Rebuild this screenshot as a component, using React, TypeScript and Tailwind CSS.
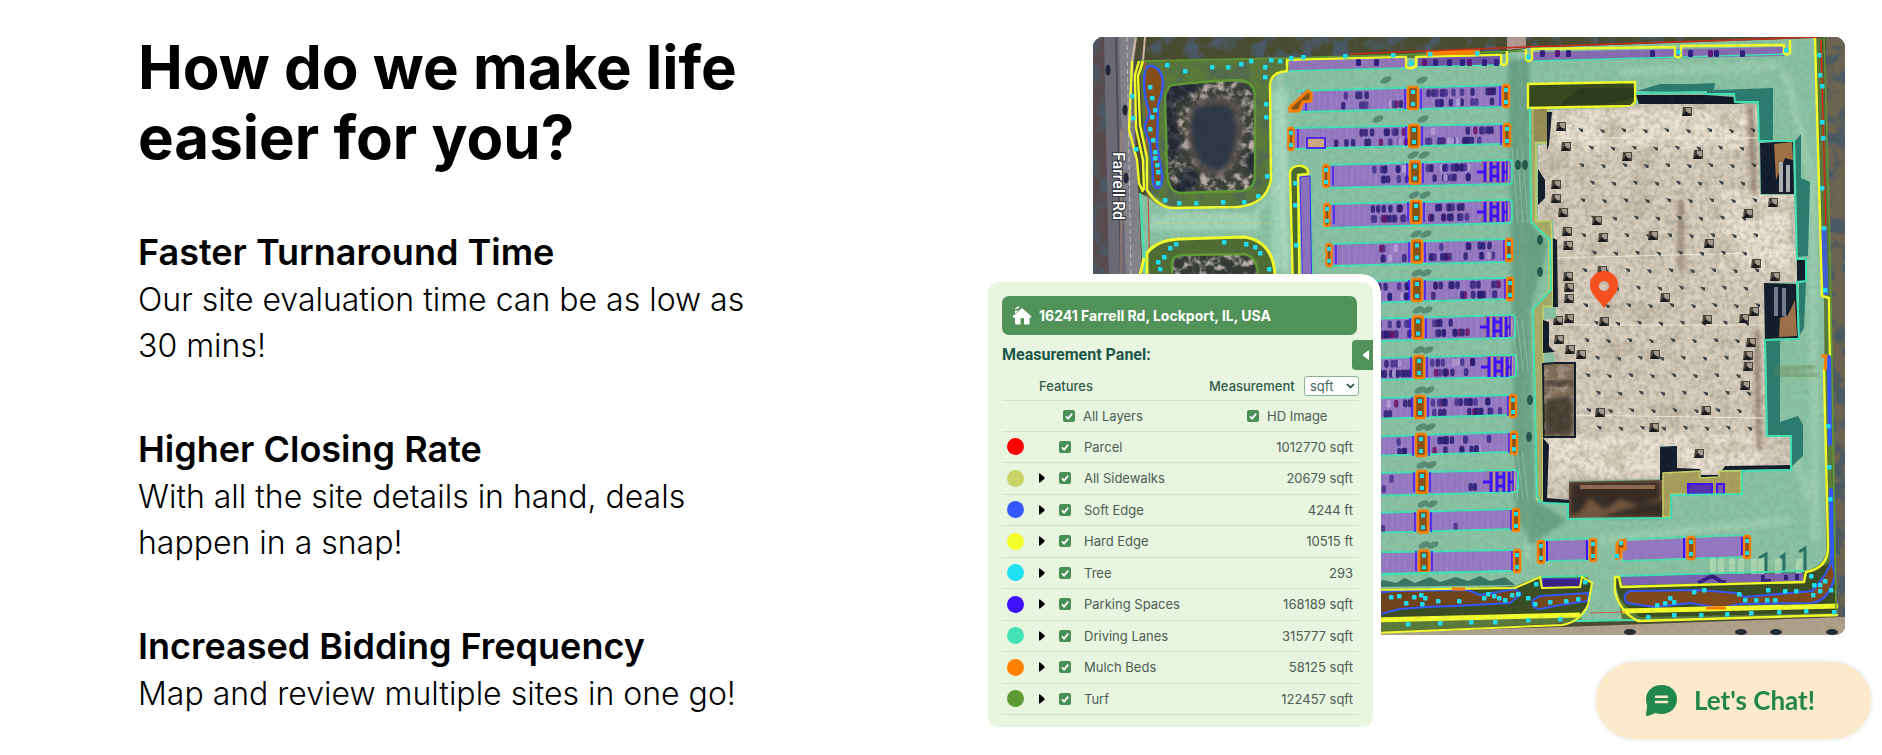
import { useState } from "react";

type Pt = [number, number];

const features = [
  { name: "Parcel", value: "1012770 sqft", dot: "bg-[#ff0000]", nested: false },
  { name: "All Sidewalks", value: "20679 sqft", dot: "bg-[#c8d468]", nested: true },
  { name: "Soft Edge", value: "4244 ft", dot: "bg-[#3358ff]", nested: true },
  { name: "Hard Edge", value: "10515 ft", dot: "bg-[#f4ff2b]", nested: true },
  { name: "Tree", value: "293", dot: "bg-[#1fdff5]", nested: true },
  { name: "Parking Spaces", value: "168189 sqft", dot: "bg-[#3c12ff]", nested: true },
  { name: "Driving Lanes", value: "315777 sqft", dot: "bg-[#43e2b4]", nested: true },
  { name: "Mulch Beds", value: "58125 sqft", dot: "bg-[#ff8000]", nested: true },
  { name: "Turf", value: "122457 sqft", dot: "bg-[#5f9b33]", nested: true },
];

const benefits = [
  { title: "Faster Turnaround Time", text: "Our site evaluation time can be as low as 30 mins!" },
  { title: "Higher Closing Rate", text: "With all the site details in hand, deals happen in a snap!" },
  { title: "Increased Bidding Frequency", text: "Map and review multiple sites in one go!" },
];

function seeded(seed: number) {
  let s = seed;
  return () => {
    s = (s * 16807) % 2147483647;
    return s / 2147483647;
  };
}

const poly = (p: Pt[]) => p.map((q) => q.join(",")).join(" ");

/* Parking bays: left x, right x, top left/right y, bottom left/right y */
const bays = [
  { l: 1301, r: 1504, tl: 91, tr: 85, bl: 112, br: 107, mid: 1413, end: 1506, cars: 20, stripes: false },
  { l: 1293, r: 1505, tl: 128, tr: 124, bl: 149, br: 144, mid: 1414, end: 1507, cars: 26, stripes: false },
  { l: 1328, r: 1511, tl: 165, tr: 160, bl: 188, br: 184, mid: 1415, end: 0, cars: 24, stripes: true },
  { l: 1329, r: 1511, tl: 204, tr: 200, bl: 228, br: 223, mid: 1416, end: 0, cars: 20, stripes: true },
  { l: 1331, r: 1508, tl: 244, tr: 239, bl: 266, br: 262, mid: 1417, end: 1509, cars: 16, stripes: false },
  { l: 1332, r: 1509, tl: 282, tr: 278, bl: 304, br: 299, mid: 1417, end: 1510, cars: 22, stripes: false },
  { l: 1333, r: 1514, tl: 320, tr: 315, bl: 342, br: 338, mid: 1418, end: 0, cars: 20, stripes: true },
  { l: 1334, r: 1515, tl: 359, tr: 355, bl: 381, br: 377, mid: 1419, end: 0, cars: 24, stripes: true },
  { l: 1335, r: 1512, tl: 399, tr: 395, bl: 420, br: 415, mid: 1420, end: 1513, cars: 20, stripes: false },
  { l: 1336, r: 1513, tl: 438, tr: 432, bl: 457, br: 452, mid: 1421, end: 1514, cars: 13, stripes: false },
  { l: 1337, r: 1517, tl: 474, tr: 470, bl: 497, br: 492, mid: 1422, end: 0, cars: 2, stripes: true },
  { l: 1338, r: 1515, tl: 514, tr: 509, bl: 534, br: 529, mid: 1423, end: 1516, cars: 1, stripes: false },
  { l: 1339, r: 1516, tl: 553, tr: 550, bl: 576, br: 571, mid: 1424, end: 1517, cars: 0, stripes: false },
];

const trees: Pt[] = [
  [1167, 65], [1185, 71], [1212, 67], [1228, 67], [1241, 64], [1251, 61], [1271, 60], [1280, 61], [1265, 67], [1265, 77],
  [1150, 87], [1152, 98], [1155, 110], [1152, 117], [1150, 129], [1153, 140], [1155, 152], [1155, 158], [1157, 165], [1158, 172], [1158, 183],
  [1132, 96], [1133, 118], [1136, 149], [1266, 104], [1266, 117], [1267, 176], [1258, 196], [1244, 202], [1223, 202], [1196, 203], [1179, 203], [1165, 200],
  [1291, 58], [1303, 57], [1345, 56], [1158, 262], [1160, 269], [1164, 257], [1170, 248], [1176, 244], [1224, 242], [1246, 244], [1255, 247], [1260, 253], [1269, 269],
  [1295, 183], [1295, 205], [1296, 245], [1393, 55], [1411, 63], [1430, 54], [1477, 53], [1528, 57], [1678, 52], [1786, 50],
  [1819, 55], [1820, 75], [1822, 86], [1822, 122], [1823, 138], [1822, 188], [1824, 228], [1825, 290], [1828, 426], [1829, 467], [1830, 499],
  [1391, 597], [1399, 596], [1406, 603], [1414, 597], [1421, 595], [1425, 598], [1422, 604], [1438, 601], [1459, 601], [1484, 598], [1488, 594], [1494, 596], [1499, 598], [1505, 600], [1512, 595], [1518, 594], [1536, 584], [1528, 598], [1535, 604], [1550, 602], [1566, 601], [1578, 599], [1585, 582],
  [1408, 624], [1440, 623], [1471, 622], [1495, 622], [1528, 620], [1560, 619],
  [1657, 605], [1665, 603], [1670, 598], [1674, 602], [1694, 592], [1704, 590], [1739, 594], [1745, 600], [1756, 600], [1767, 600], [1775, 600], [1768, 590], [1785, 591], [1796, 591], [1811, 576], [1814, 585], [1820, 585], [1825, 581], [1820, 591], [1813, 595], [1831, 590],
  [1648, 617], [1674, 615], [1701, 615], [1727, 614], [1751, 613], [1779, 612], [1806, 611], [1834, 612],
];

const vents: Pt[] = [
  [1562, 126], [1567, 146], [1557, 184], [1557, 198], [1564, 212], [1568, 231], [1569, 245], [1569, 276], [1598, 220], [1628, 156], [1699, 154], [1688, 111],
  [1654, 235], [1710, 243], [1749, 213], [1774, 202], [1757, 263], [1776, 276], [1570, 287], [1570, 298], [1559, 320], [1570, 318], [1603, 270], [1560, 339], [1571, 349], [1582, 354],
  [1605, 321], [1666, 297], [1708, 319], [1745, 318], [1755, 311], [1752, 342], [1749, 355], [1749, 366], [1746, 385], [1656, 354], [1601, 412], [1707, 410], [1655, 427], [1700, 453], [1604, 237],
];

const roof: Pt[] = [
  [1550, 110], [1620, 108], [1640, 104], [1758, 104], [1760, 195], [1794, 195], [1797, 282], [1764, 283], [1765, 436], [1790, 437], [1790, 468],
  [1722, 469], [1719, 475], [1700, 477], [1700, 469], [1677, 469], [1676, 446], [1660, 446], [1660, 479], [1570, 481], [1569, 502], [1545, 502],
  [1543, 438], [1574, 437], [1574, 363], [1555, 363], [1554, 353], [1543, 353], [1543, 320], [1556, 318], [1556, 290], [1553, 220], [1538, 220], [1538, 145], [1549, 144],
];

function Island({ x, y, w = 6, h = 22 }: { x: number; y: number; w?: number; h?: number }) {
  return (
    <g>
      <rect x={x - w / 2} y={y} width={w} height={h} rx={2} fill="#8a5318" stroke="#ff8000" strokeWidth={2.4} />
      <rect x={x - 2} y={y + 3} width={4} height={4} fill="#1fdff5" />
      <rect x={x - 2} y={y + h - 7} width={4} height={4} fill="#1fdff5" />
    </g>
  );
}

function SiteMap() {
  const rnd = seeded(77);
  return (
    <svg viewBox="1093 37 752 598" className="block h-auto w-full rounded-[10px]" role="img" aria-label="Measured aerial site map">
      <defs>
        <filter id="grain" x="0" y="0" width="100%" height="100%">
          <feTurbulence type="fractalNoise" baseFrequency="0.2" numOctaves="3" seed="4" />
          <feColorMatrix values="0 0 0 0 0.1  0 0 0 0 0.1  0 0 0 0 0.08  1.6 0 0 0 -0.6" />
        </filter>
        <filter id="weather" x="0" y="0" width="100%" height="100%">
          <feTurbulence type="fractalNoise" baseFrequency="0.035 0.05" numOctaves="4" seed="14" />
          <feColorMatrix values="0 0 0 0 0.5  0 0 0 0 0.43  0 0 0 0 0.34  3.5 0 0 0 -1.7" />
        </filter>
        <filter id="foliage" x="0" y="0" width="100%" height="100%">
          <feTurbulence type="fractalNoise" baseFrequency="0.06" numOctaves="4" seed="9" />
          <feColorMatrix values="0 0 0 0 0.07  0 0 0 0 0.1  0 0 0 0 0.13  5 0 0 0 -2.3" />
        </filter>
        <filter id="scrub" x="0" y="0" width="100%" height="100%">
          <feTurbulence type="fractalNoise" baseFrequency="0.12" numOctaves="4" seed="21" />
          <feColorMatrix values="0 0 0 0 0.5  0 0 0 0 0.44  0 0 0 0 0.4  4 0 0 0 -1.8" />
        </filter>
        <filter id="soft"><feGaussianBlur stdDeviation="2" /></filter>
        <clipPath id="pondClip"><path d="M1172 85 Q1205 81 1240 80 Q1254 82 1255 96 V178 Q1253 190 1242 191 L1180 193 Q1168 192 1167 172 L1165 98 Q1166 88 1172 85Z" /></clipPath>
        <clipPath id="pond2Clip"><path d="M1172 275 V262 Q1173 255 1184 255 L1245 254 Q1257 257 1258 275Z" /></clipPath>
        <clipPath id="roofClip"><polygon points={poly(roof)} /></clipPath>
      </defs>

      {/* Ground, woods and road */}
      <rect x="1093" y="37" width="752" height="598" fill="#4a4c30" />
      <rect x="1140" y="37" width="705" height="26" filter="url(#foliage)" />
      <rect x="1093" y="37" width="20" height="300" fill="#584b4d" />
      <rect x="1093" y="37" width="20" height="300" filter="url(#foliage)" />
      <rect x="1826" y="37" width="19" height="598" fill="#6d6551" />
      <rect x="1824" y="37" width="21" height="598" filter="url(#foliage)" />
      <polygon points="1104,37 1133,37 1139,280 1109,280" fill="#6c6b75" />
      <polygon points="1119,37 1137,37 1131,90 1139,200 1142,280 1126,280" fill="#84828a" />
      <path d="M1116 37 L1121 280" stroke="#4f4d5b" strokeWidth="2" />
      <path d="M1127 37 L1131 280" stroke="#d8cdbd" strokeWidth=".8" strokeDasharray="5 3" />
      <path d="M1121 130 V280" stroke="#b79b7d" strokeWidth="1" />
      <path d="M1136 37 L1132 61 M1145 37 L1143 61" stroke="#d1b9a1" strokeWidth="2" />
      {[[1108, 70], [1125, 110], [1126, 178]].map(([x, y]) => <ellipse key={y} cx={x} cy={y} rx="2.6" ry="5.5" fill="#202638" />)}
      <polygon points="1373,633 1590,626 1845,617 1845,635 1373,635" fill="#b0a18b" />
      {[1630, 1741, 1776, 1832].map((x) => <ellipse key={x} cx={x} cy="632" rx="6" ry="3" fill="#222b33" />)}

      {/* Turf */}
      <polygon points="1140,61 1350,56 1525,50 1822,38 1828,200 1836,610 1838,616 1610,621 1373,632 1150,300" fill="#5a7a3c" />
      <rect x="1145" y="61" width="127" height="150" filter="url(#foliage)" opacity=".45" />

      {/* Drive lanes */}
      <path d="M1288 62 L1290 70 Q1270 74 1270 90 L1270 180 Q1266 207 1237 207 L1170 208 Q1155 207 1148 197 L1139 193 L1143 280 L1150 280 L1150 252 Q1160 240 1180 239 L1244 237 Q1272 241 1275 280 L1373 400 V592 L1515 586 L1540 576 L1588 577 L1592 590 L1580 622 L1622 620 L1615 577 L1804 571 Q1828 566 1826 545 L1824 300 L1815 38 L1527 48 L1500 55 L1350 60Z" fill="#8ac2a4" />
      <path d="M1150 197 L1175 215 H1255 L1290 175 M1280 75 L1287 280 M1520 52 L1528 560" fill="none" stroke="#bfe0c9" strokeWidth="5" opacity=".45" filter="url(#soft)" />
      <path d="M1150 223 H1260 M1280 90 V270" fill="none" stroke="#b4e3cf" strokeWidth="16" opacity=".55" filter="url(#soft)" />
      <path d="M1620 72 L1780 66 M1785 70 L1800 130 L1812 180 L1815 540 M1600 540 L1790 520 M1790 440 L1810 500" fill="none" stroke="#b4dcbf" strokeWidth="9" opacity=".4" filter="url(#soft)" />
      <polygon points="1508,60 1529,58 1531,222 1548,245 1530,310 1535,500 1568,520 1530,545 1515,510" fill="#5c9579" opacity=".7" filter="url(#soft)" />
      <path d="M1140 193 L1146 280 M1310 175 L1312 280" stroke="#43e2b4" strokeWidth="2" />
      <path d="M1145 61 L1150 280" stroke="#bc593c" strokeWidth="1.2" />
      <path d="M1155 223 H1270" stroke="#bdd68d" strokeWidth="1" />

      {/* Pond basin */}
      <g clipPath="url(#pondClip)">
        <rect x="1160" y="75" width="100" height="125" fill="#3b403a" />
        <rect x="1160" y="75" width="100" height="125" filter="url(#scrub)" />
        <path d="M1160 80 H1205 L1190 95 L1175 105 L1182 150 L1170 165Z M1185 165 L1200 175 L1190 195 H1172Z M1240 160 L1256 150 V175Z" fill="#1a2430" opacity=".8" filter="url(#soft)" />
        <path d="M1190 105 Q1210 90 1238 100 Q1246 120 1242 145 Q1240 168 1222 178 L1198 172 Q1180 140 1190 105Z" fill="#59514f" opacity=".8" filter="url(#soft)" />
        <path d="M1195 112 Q1209 102 1229 109 Q1236 120 1233 138 Q1231 160 1219 168 L1203 163 Q1190 140 1195 112Z" fill="#2e3945" stroke="#2e3945" strokeWidth="4" filter="url(#soft)" />
      </g>
      <path d="M1172 85 Q1205 81 1240 80 Q1254 82 1255 96 V178 Q1253 190 1242 191 L1180 193 Q1168 192 1167 172 L1165 98 Q1166 88 1172 85Z" fill="none" stroke="#5f9b33" strokeWidth="2.4" />
      <path d="M1146 275 V253 Q1157 240 1180 239 L1244 237 Q1273 241 1275 275Z" fill="#4f6e35" />
      <g clipPath="url(#pond2Clip)">
        <rect x="1170" y="252" width="90" height="24" fill="#333a36" />
        <rect x="1170" y="252" width="90" height="24" filter="url(#scrub)" />
      </g>
      <path d="M1172 275 V262 Q1173 255 1184 255 L1245 254 Q1257 257 1258 275" fill="none" stroke="#5f9b33" strokeWidth="2.4" />
      <path d="M1140 61 L1288 58 L1525 51" fill="none" stroke="#5f9b33" strokeWidth="1.6" />

      {/* Roadside mulch */}
      <path d="M1149 66 Q1160 65 1163 81 Q1162 95 1158 105 L1157 145 L1162 175 Q1162 188 1158 188 Q1152 188 1153 172 L1150 142 Q1143 128 1146 122 L1150 113 Q1144 98 1144 82 Q1144 68 1149 66Z" fill="#85501a" stroke="#3358ff" strokeWidth="2.4" />
      <g fill="none" stroke="#f4ff2b" strokeWidth="2.4" strokeLinejoin="round">
        <path d="M1132 61 L1129 130 L1137 160 L1139 183 L1143 192 M1139 61 L1135 75 L1136 128 L1143 160 L1144 190" />
        <path d="M1143 61 L1138 76 L1140 125 L1147 158 V190 Q1158 207 1172 208 L1237 207 Q1266 205 1271 180 L1270 85 Q1271 72 1287 71 V60 L1406 57 V67 Q1411 70 1416 66 V57 L1501 55 V64 Q1506 67 1507 62 V51" />
        <path d="M1140 275 L1144 258 M1147 275 V253 Q1157 240 1180 239 L1244 237 Q1273 241 1275 275" strokeWidth="3" />
        <path d="M1294 330 L1290 172 Q1292 165 1302 166 Q1309 168 1308 174 L1298 175 L1300 330" fill="#4c6a2f" />
      </g>
      <polygon points="1300,177 1310,176 1312,300 1303,300" fill="#8e72bd" stroke="#3c12ff" strokeWidth=".8" />

      {/* Top parking strip */}
      <polygon points="1289,61 1405,58 1405,68 1289,71" fill="#9476ba" />
      <polygon points="1418,58 1500,56 1500,65 1418,67" fill="#7055a7" />
      <polygon points="1533,52 1784,47 1784,56 1533,61" fill="#876cb3" />
      <path d="M1289 71 L1405 68 M1418 67 L1500 65 M1533 61 L1790 54" stroke="#43e2b4" strokeWidth="1.6" />
      {[1356, 1374, 1422, 1433, 1447, 1460, 1467, 1482, 1494, 1540, 1555, 1566, 1650, 1688, 1708, 1714, 1740].map((x, i) => (
        <rect key={x} x={x} y={x > 1530 ? 50 : 59} width="5" height="7" rx="1.5" fill={i % 4 === 2 ? "#5c1a78" : "#302080"} />
      ))}
      <path d="M1426 53 L1480 52" stroke="#ff8000" strokeWidth="5" />
      <polygon points="1507,37 1526,37 1526,48 1507,50" fill="#b29991" />
      <path d="M1350 54 L1525 47 L1820 37 M1821 40 L1826 230" fill="none" stroke="#c82c16" strokeWidth="1.6" />
      <path d="M1526 49 V59 Q1528 63 1532 59 V49 L1675 47 V56 Q1678 59 1681 56 V46 L1784 45 V53 Q1787 56 1790 53 V40" fill="none" stroke="#f4ff2b" strokeWidth="2.4" />

      {/* Parking bays */}
      {bays.map((b, i) => {
        const items = [];
        const span = b.r - b.l;
        for (let k = 0; k < b.cars * 2; k++) {
          const x = b.l + 40 + rnd() * (span - (b.stripes ? 84 : 52));
          const f = (x - b.l) / span;
          const top = b.tl + (b.tr - b.tl) * f;
          const lane = rnd() > 0.5 ? 2 : 12;
          const tone = rnd();
          if (Math.abs(x - b.mid) > 10) {
            items.push(
              <rect key={k} x={x} y={top + lane} width={4.4} height={8} rx={2.1} fill={tone > 0.93 ? "#6b1463" : tone > 0.82 ? "#b9a5dc" : tone > 0.5 ? "#45318d" : "#2a1c72"} opacity={0.85} />,
            );
          }
        }
        const shadows = [b.mid + 9, b.l + 85].map((x, k) => <ellipse key={k} cx={x} cy={b.tr - 5} rx="6" ry="3" fill="#376a56" opacity=".6" transform={`rotate(-25 ${x} ${b.tr - 5})`} />);
        const lines = [];
        for (let x = b.l + 6; x < b.r - 3; x += 6) lines.push(`M${x} ${b.tl + (b.tr - b.tl) * ((x - b.l) / span) + 1}v20`);
        return (
          <g key={i}>
            {shadows}
            <polygon points={poly([[b.l, b.tl], [b.r, b.tr], [b.r, b.br], [b.l, b.bl]])} fill="#9578c3" />
            <path d={lines.join("")} stroke="#a98fc9" strokeWidth=".6" />
            {items}
            <path d={`M${b.l - 4} ${b.tl} L${b.r - 2} ${b.tr} ${b.stripes ? `Q${b.r + 1} ${b.tr} ${b.r + 1} ${b.tr + 3} V${b.br - 3} Q${b.r + 1} ${b.br} ${b.r - 2} ${b.br}` : `M${b.r - 2} ${b.br}`} L${b.l - 4} ${b.bl}`} fill="none" stroke="#43e2b4" strokeWidth="1.8" />
            {b.stripes && (
              <g>
                <rect x={b.r - 30} y={b.tr + 1} width={28} height={b.br - b.tr - 2} fill="#9c7b97" />
                <path d={`M${b.r - 26} ${b.tr + 2}v20 M${b.r - 20} ${b.tr + 2}v20 M${b.r - 13} ${b.tr + 2}v20 M${b.r - 8} ${b.tr + 2}v20`} stroke="#3c12ff" strokeWidth="3" />
                <path d={`M${b.r - 34} ${b.tr + 12}h8 M${b.r - 20} ${b.tr + 7}h7 M${b.r - 20} ${b.tr + 16}h7 M${b.r - 8} ${b.tr + 12}h4`} stroke="#3c12ff" strokeWidth="3" />
                <path d={`M${b.r - 23} ${b.tr + 2}v19 M${b.r - 10.5} ${b.tr + 2}v19 M${b.r - 3} ${b.tr + 2}v19`} stroke="#c7a67d" strokeWidth="1.6" />
              </g>
            )}
            <path d={`M${b.mid - 8} ${b.tl - 2} v20 M${b.mid + 8} ${b.tl - 2} v20 M${b.r - 4} ${b.tr + 1}v20 M${b.l + 5} ${b.tl + 1}v19`} stroke="#3c12ff" strokeWidth="1.4" />
            <Island x={b.mid} y={(b.tl + b.tr) / 2 - 1} w={10} />
            {b.end > 0 && <Island x={b.end} y={b.tr} />}
            {i > 0 && <Island x={b.l - 2} y={b.tl} w={5} />}
          </g>
        );
      })}
      <path d="M1290 107 L1308 91 L1311 93 L1311 101 L1303 102 L1299 111 L1290 111Z" fill="#8a5318" stroke="#ff8000" strokeWidth="3" />
      <rect x="1307" y="138" width="18" height="10" fill="#d0aa83" stroke="#3c12ff" strokeWidth="1.6" />
      <g stroke="#b4d6bd" strokeWidth=".7" opacity=".7">
        {[147, 320, 450].map((y) => <path key={y} d={`M1512 ${y} l6 ${y === 147 ? 76 : 50} M1517 ${y} l6 ${y === 147 ? 76 : 50} M1522 ${y} l6 ${y === 147 ? 76 : 50}`} />)}
      </g>
      {[[1518, 165], [1525, 165], [1540, 240], [1540, 272], [1530, 400], [1529, 437]].map(([x, y]) => <ellipse key={`${x}-${y}`} cx={x} cy={y} rx="3" ry="5" fill="#24594e" />)}

      {/* Building surroundings */}
      <g fill="#2a7d6f">
        <path d="M1637 91 L1660 84 H1690 L1715 83 L1714 90 L1773 88 V141 H1759 V102 H1735 V94Z" />
        <path d="M1795 141 L1801 134 V178 L1810 182 L1808 256 L1797 257Z" />
        <path d="M1766 340 H1780 V422 L1798 416 L1803 425 V456 L1790 468 V436 H1767Z" />
        <path d="M1799 283 L1806 282 L1804 328 L1799 336Z" />
      </g>
      <path d="M1775 370 L1815 366 M1778 376 H1818" stroke="#6f8a50" strokeWidth="4" opacity=".7" filter="url(#soft)" />
      <polygon points="1530,108 1548,108 1548,143 1536,143 1536,221 1551,221 1553,306 1543,307 1543,500 1537,500 1533,310 1549,290 1549,240 1531,221" fill="#a9ad69" stroke="#c8d468" strokeWidth="1.4" />
      <polygon points="1534,108 1547,108 1547,141 1534,141" fill="#958e57" />
      <polygon points="1636,95 1706,95 1734,97 1734,103 1758,105 1758,108 1640,107" fill="#101a26" />
      <polygon points="1528,84 1635,82 1635,102 1631,106 1528,108" fill="#38481d" stroke="#f4ff2b" strokeWidth="2.4" />
      <path d="M1560 104 L1580 88 H1634 V98 L1600 105Z" fill="#25361b" opacity=".7" />

      {/* Roof */}
      <polygon points={poly(roof)} fill="#d9cfc0" />
      <g clipPath="url(#roofClip)">
        <path d="M1550 110 H1750 V150 H1560Z M1545 435 H1760 V475 H1545Z M1720 190 H1790 V270 H1720Z" fill="#efe6d7" opacity=".8" filter="url(#soft)" />
        <rect x="1535" y="100" width="270" height="405" filter="url(#weather)" opacity=".55" />
        <rect x="1535" y="100" width="270" height="405" filter="url(#grain)" opacity=".25" />
        <path d="M1750 104 L1754 195 M1681 200 V270 M1757 330 L1759 450" stroke="#6d5946" strokeWidth="5" opacity=".6" filter="url(#soft)" />
        <path d="M1555 138 H1758 M1550 258 L1797 252 M1560 325 H1764 M1570 415 L1765 418" stroke="#efe9dc" strokeWidth="1" />
        {Array.from({ length: 18 }).map((_, r) =>
          Array.from({ length: 10 }).map((__, c) => {
            const x = 1578 + c * 21.5 + (r % 2 ? 10 : 0) + r * 0.5;
            const y = 128 + r * 17.5 + (c % 2);
            return x < 1756 ? <path key={`${r}-${c}`} d={`M${x} ${y}l5 1v3l-2 0z`} fill="#3e4548" /> : null;
          }),
        )}
        {vents.map(([x, y]) => (
          <g key={`${x}-${y}`}>
            <path d={`M${x - 5} ${y - 4} h9 v9 h-10z`} fill="#4b463f" />
            <path d={`M${x - 2} ${y - 3} h5 v5 h-5z`} fill="#a49c8f" />
            <path d={`M${x - 6} ${y + 5} l4 -5 l5 5z`} fill="#17191c" />
          </g>
        ))}
      </g>
      <g fill="#131c2b">
        <polygon points="1538,169 1545,180 1545,198 1538,205" />
        <polygon points="1549,145 1552,112 1547,112 1547,150" />
        <polygon points="1553,238 1557,240 1558,307 1553,307" />
        <polygon points="1543,320 1549,322 1549,346 1555,352 1543,353" />
        <polygon points="1543,438 1549,445 1547,498 1570,500 1570,503 1543,503" />
        <polygon points="1760,143 1793,141 1794,194 1761,194" />
        <polygon points="1764,283 1796,284 1798,338 1765,339" />
        <polygon points="1797,259 1805,259 1805,281 1797,281" />
        <polygon points="1660,447 1677,446 1677,468 1700,469 1701,475 1719,475 1725,466 1790,465 1790,469 1722,470 1719,480 1660,480" />
      </g>
      <polygon points="1555,363 1575,363 1575,437 1544,437 1543,364" fill="#806d57" stroke="#131c2b" strokeWidth="2" />
      <rect x="1544" y="364" width="30" height="72" filter="url(#scrub)" opacity=".5" />
      <path d="M1545 385 l8 -4 7 5 6 -5 7 4" fill="none" stroke="#292821" strokeWidth="3" filter="url(#soft)" />
      <path d="M1545 400 L1572 396 V435 H1545Z" fill="#322d27" opacity=".75" filter="url(#soft)" />
      <polygon points="1569,482 1662,480 1671,493 1670,517 1569,518" fill="#75583f" />
      <path d="M1570 483 L1660 482 V498 L1640 506 L1620 499 L1605 510 L1590 498 L1580 512 L1570 516Z M1600 517 L1630 508 L1665 500 V517Z" fill="#211f1e" opacity=".75" filter="url(#soft)" />
      <path d="M1580 487 H1655" stroke="#8d6a50" strokeWidth="4" />
      <polygon points="1774,144 1792,142 1793,160 1785,158 1776,180" fill="#a17144" />
      <path d="M1781 162 V192 M1788 165 V192" stroke="#aeb2b7" strokeWidth="4" />
      <polygon points="1779,337 1780,318 1788,315 1795,300 1797,336" fill="#9c7048" />
      <path d="M1776 287 V316 M1784 288 V316" stroke="#747e91" strokeWidth="4" />
      <polygon points="1663,473 1700,471 1700,478 1719,477 1719,471 1741,471 1741,494 1671,494 1670,517 1663,517" fill="#a9a05c" stroke="#c8d468" strokeWidth="1.5" />
      <rect x="1688" y="484" width="24" height="10" fill="#5632ae" stroke="#3c12ff" strokeWidth="2" />
      <rect x="1717" y="484" width="7" height="10" fill="#7d5cb0" stroke="#3c12ff" strokeWidth="2" />
      <path d="M1530 108 L1531 222 L1550 240 L1551 290 L1533 309 L1537 495 Q1538 503 1547 503 L1568 504 V519 L1671 518 V495 L1742 494 V471 L1791 470 V436 L1767 436 L1765 340 L1799 339 L1797 282 L1806 281 V259 L1797 259 L1794 141 L1759 141 L1758 102 L1735 102 L1734 94 L1706 94 V92 L1636 93" fill="none" stroke="#43e2b4" strokeWidth="2" />

      {/* South bays */}
      <polygon points="1546,541 1586,540 1586,560 1546,561" fill="#9578c3" />
      <polygon points="1623,541 1745,536 1745,556 1623,560" fill="#9578c3" />
      <path d="M1541 540 L1592 538 M1545 561 L1590 560 M1624 539 L1745 535 M1622 561 L1742 557" stroke="#43e2b4" strokeWidth="1.6" />
      <path d="M1547 541 V561 M1587 540 V560 M1684 538 V558 M1695 538 V558 M1742 537 V555" stroke="#3c12ff" strokeWidth="2" />
      <Island x={1541} y={541} /><Island x={1593} y={539} /><Island x={1691} y={537} w={7} /><Island x={1747} y={536} />
      <path d="M1617 558 V544 Q1619 540 1625 540 V549 H1621 V557Z" fill="#8a5318" stroke="#ff8000" strokeWidth="3" />
      <rect x="1619" y="541" width="4" height="4" fill="#1fdff5" />
      <rect x="1615" y="554" width="4" height="4" fill="#1fdff5" />
      <path d="M1759 558 l7 -4 v20 M1780 558 l4 -3 v18 M1799 552 l6 -4 v22" stroke="#2a7467" strokeWidth="3" fill="none" />
      <g fill="#a9d6ad">
        {[1710, 1718, 1729, 1738, 1751, 1758, 1775, 1796].map((x) => <path key={x} d={`M${x} 559 l6 -1 v16 h-6z`} />)}
      </g>
      <polygon points="1622,576 1803,573 1803,581 1622,585" fill="#7e63b2" />
      <path d="M1698 583 l14 -7 10 6 h4 M1763 575 v6 h8 M1786 575 v5 M1797 574 v6" fill="none" stroke="#34207f" strokeWidth="4" />
      <path d="M1373 574 L1512 571 M1540 577 L1586 576 M1618 576 L1804 571 M1590 590 Q1590 615 1573 621 L1640 620" stroke="#43e2b4" strokeWidth="1.8" fill="none" />
      <path d="M1373 587 L1383 580 1396 583 1405 578 1415 583 1430 577 1440 582 1456 577 1468 581 1480 576 1490 581 1505 577 1515 585Z" fill="#397765" />
      <rect x="1543" y="579" width="37" height="8" fill="#38217f" stroke="#3c12ff" strokeWidth="1" />

      {/* South landscape strip */}
      <path d="M1373 589 L1515 588 L1540 577 V587 H1580 V577 L1591 582 L1588 605 L1580 614 L1373 619Z" fill="#3b4d22" />
      <path d="M1373 593 L1395 591 L1468 590 L1480 595 L1515 589 L1521 594 L1510 603 L1455 606 L1425 607 L1400 609 L1373 616Z" fill="#6e431b" stroke="#3358ff" strokeWidth="2" />
      <path d="M1540 596 L1588 593 V601 L1560 605 L1540 609 Q1530 608 1533 600Z" fill="#754818" stroke="#3358ff" strokeWidth="2" />
      <path d="M1618 577 L1620 586 L1804 583 L1806 573 L1828 564 L1836 560 V613 L1640 617 Q1613 600 1616 578Z" fill="#3b4d22" />
      <path d="M1630 591 L1700 590 L1735 593 L1745 597 L1812 591 Q1827 575 1832 560 L1835 575 Q1830 600 1812 603 L1740 604 L1720 608 L1690 603 L1655 607 L1627 603 Q1621 595 1630 591Z" fill="#80491a" stroke="#3358ff" strokeWidth="2.2" />
      <g fill="none" stroke="#f4ff2b">
        <path d="M1373 590 L1515 588 L1540 577 L1542 588 L1580 587 L1582 577 L1592 583 L1588 605 Q1580 622 1562 625 L1373 633" strokeWidth="2" />
        <path d="M1373 620 L1580 615" strokeWidth="5" />
        <path d="M1815 38 L1822 296 L1829 298 L1830 357 L1824 370 L1828 545 Q1829 568 1806 572 L1804 582 L1621 587 L1619 577 L1615 577 V592 Q1620 612 1638 621 L1838 615" strokeWidth="2.4" />
        <path d="M1622 611 L1838 606" strokeWidth="5" />
      </g>
      <path d="M1452 589 H1465 M1706 608 H1726" stroke="#ff8000" strokeWidth="3" />
      <path d="M1824 37 L1830 250 L1836 610" stroke="#5f9b33" strokeWidth="1.6" fill="none" />
      <path d="M1824 229 L1826 295" stroke="#405fd2" strokeWidth="5" />
      <path d="M1829 357 L1830 444 M1831 490 L1832 560" stroke="#3358ff" strokeWidth="4" strokeLinecap="round" />
      <path d="M1821 356 h5 l-1 14" stroke="#ff8000" strokeWidth="3" fill="none" />
      <path d="M1590 613 L1625 612" stroke="#c9614c" strokeWidth="1" />
      {trees.map(([x, y]) => <rect key={`${x}-${y}`} x={x - 2} y={y - 2} width="4.5" height="4.5" rx=".8" fill="#1fdff5" />)}

      <rect x="1093" y="37" width="752" height="598" filter="url(#grain)" opacity=".14" />
      <text x="0" y="0" transform="translate(1113 152) rotate(90)" className="fill-white stroke-[#33343d] font-['Roboto'] text-[16px] font-medium [paint-order:stroke]" strokeWidth="2">Farrell Rd</text>
      <path fillRule="evenodd" d="M1604 308 C1598 299 1590 294 1590 285 A14 14 0 0 1 1618 285 C1618 294 1610 299 1604 308Z M1604 281 a5 5 0 1 0 .01 0Z" fill="#f4511e" />
    </svg>
  );
}

function CheckBox({ id, name }: { id?: string; name?: string }) {
  return (
    <span className="relative inline-block size-3">
      <input id={id} aria-label={name} type="checkbox" defaultChecked className="peer block size-full appearance-none rounded-[2px] border border-[#4a8f55] checked:bg-[#4a8f55]" />
      <svg viewBox="0 0 12 12" className="pointer-events-none absolute inset-0 hidden size-full peer-checked:block" aria-hidden="true">
        <path d="M3 6.4 5.1 8.6 9.2 3.6" fill="none" stroke="#fff" strokeWidth="1.7" />
      </svg>
    </span>
  );
}

function MeasurementPanel() {
  const [unit, setUnit] = useState("sqft");
  return (
    <section className="absolute left-0 top-[237px] rounded-tr-[20px] bg-white pr-2 pt-2" aria-label="Measurement panel">
      <div className="w-[385px] rounded-[10px] bg-[#e8f5df] px-[14px] pb-3 pt-[14px] font-['Inter',sans-serif] text-[13px] leading-4 text-[#4c5c55]">
        <div className="mr-[2px] flex h-[39px] items-center gap-[7px] rounded-[7px] bg-[#519259] pl-[10px] text-[14px] font-bold text-white">
          <svg viewBox="0 0 20 19" className="h-[19px] w-5" fill="#fff" aria-hidden="true">
            <path d="M10 2 19.5 10.5 18.6 12 17.5 11.5V17.5Q17.5 18.5 16.5 18.5H12V13Q12 12 11 12H9.5Q8.5 12 8.5 13V18.5H4Q3 18.5 3 17.5V11.5L1.5 12 .5 10.5Z" />
            <path d="M3 7.5V4.5H5.5V5.5ZM2.5 3.5Q4 .5 8 .5 7 3 2.5 3.5Z" />
          </svg>
          <span>16241 Farrell Rd, Lockport, IL, USA</span>
        </div>
        <div className="-mr-[14px] mt-[5px] flex items-center justify-between">
          <h4 className="font-['Roboto',sans-serif] text-[16px] font-bold text-[#1b5648]">Measurement Panel:</h4>
          <button type="button" aria-label="Collapse panel" className="flex h-[30px] w-[21px] items-center justify-end rounded-l-[4px] bg-[#519259] pr-1">
            <svg viewBox="0 0 6 10" className="h-[10px] w-[6px]" aria-hidden="true"><path d="M6 0V10L0 5.8V4.2Z" fill="#fff" /></svg>
          </button>
        </div>
        <table className="mt-[3px] w-full table-fixed border-collapse">
          <colgroup>
            <col className="w-[36px]" /><col className="w-[21px]" /><col className="w-[25px]" /><col /><col className="w-[150px]" />
          </colgroup>
          <thead>
            <tr className="h-[27px] border-b border-[#d5dfd2] text-[#315c4e]">
              <th colSpan={4} className="pl-[37px] text-left font-medium">Features</th>
              <th className="font-medium">
                <div className="flex items-center justify-between">
                  <label htmlFor="unit">Measurement</label>
                  <span className="relative">
                    <select id="unit" value={unit} onChange={(e) => setUnit(e.target.value)} className="block h-5 w-[55px] appearance-none rounded-[3px] border border-[#8ab491] bg-white pl-[5px] font-normal text-[#41695b]">
                      <option>sqft</option>
                      <option>sqm</option>
                    </select>
                    <svg viewBox="0 0 9 6" className="pointer-events-none absolute right-1 top-[7px] h-[6px] w-[9px]" aria-hidden="true"><path d="M1 1 4.5 4.5 8 1" fill="none" stroke="#1b4a3e" strokeWidth="1.7" /></svg>
                  </span>
                </div>
              </th>
            </tr>
          </thead>
          <tbody>
            <tr className="h-[31px] border-b border-[#d5dfd2]">
              <td colSpan={4} className="pl-[61px]">
                <div className="flex items-center gap-2"><CheckBox id="all-layers" /><label htmlFor="all-layers">All Layers</label></div>
              </td>
              <td className="pl-[38px]">
                <div className="flex items-center gap-2"><CheckBox id="hd-image" /><label htmlFor="hd-image">HD Image</label></div>
              </td>
            </tr>
            {features.map((f) => (
              <tr key={f.name} className="h-8 border-b border-[#d5dfd2] even:h-[31px]">
                <td className="pl-[5px]"><span className={`block size-[17px] rounded-full ${f.dot}`} /></td>
                <td>
                  {f.nested && (
                    <button type="button" aria-label={`Expand ${f.name}`} className="block">
                      <svg viewBox="0 0 7 10" className="h-[10px] w-[7px]" aria-hidden="true"><path d="M1 .5H2L6.5 4.2V5.8L2 9.5H1Z" fill="#000" /></svg>
                    </button>
                  )}
                </td>
                <td><div className="flex"><CheckBox name={`Show ${f.name}`} /></div></td>
                <td>{f.name}</td>
                <td className="pr-[6px] text-right">{f.value}</td>
              </tr>
            ))}
          </tbody>
        </table>
      </div>
    </section>
  );
}

export default function App() {
  return (
    <div className="bg-white">
      <main className="grid grid-cols-[850fr_857fr] pb-5 pl-[138px] pr-[37px] text-black">
        <div className="pt-8 font-['Inter',sans-serif]">
          <h2 className="max-w-[640px] text-[60px] font-bold leading-[70px]">How do we make life easier for you?</h2>
          <div className="mt-[55px] flex flex-col gap-[55px]">
            {benefits.map((b) => (
              <div key={b.title}>
                <h3 className="text-[36px] font-semibold leading-[50px]">{b.title}</h3>
                <p className="max-w-[640px] text-[32px] font-light leading-[46px]">{b.text}</p>
              </div>
            ))}
          </div>
        </div>
        <div className="relative pt-[37px]">
          <div className="pl-[105px]"><SiteMap /></div>
          <div className="absolute inset-x-0 top-[37px]"><MeasurementPanel /></div>
        </div>
      </main>
      <button type="button" className="fixed bottom-4 right-[11px] flex h-[77px] w-[275px] items-center gap-4 rounded-full bg-[#fdeacb] pl-[49px] font-['Lato',sans-serif] text-[26px] font-bold text-[#22874b] shadow-[0_0_4px_rgba(0,0,0,0.15)]">
        <svg viewBox="0 0 33 33" className="size-[33px]" aria-hidden="true">
          <path d="M16.5 1C25.5 1 32 7 32 15.3S25.5 30 16.5 30Q13 30 10.500 29L3 32Q.8 32.500 1 30.500L2.200 22Q1 19 1 15.300C1 7 7.500 1 16.500 1Z" fill="#22874b" />
          <path d="M11 12.800H22M11 18H22" stroke="#fdeacb" strokeWidth="2.600" strokeLinecap="round" />
        </svg>
        <span>Let's Chat!</span>
      </button>
    </div>
  );
}
